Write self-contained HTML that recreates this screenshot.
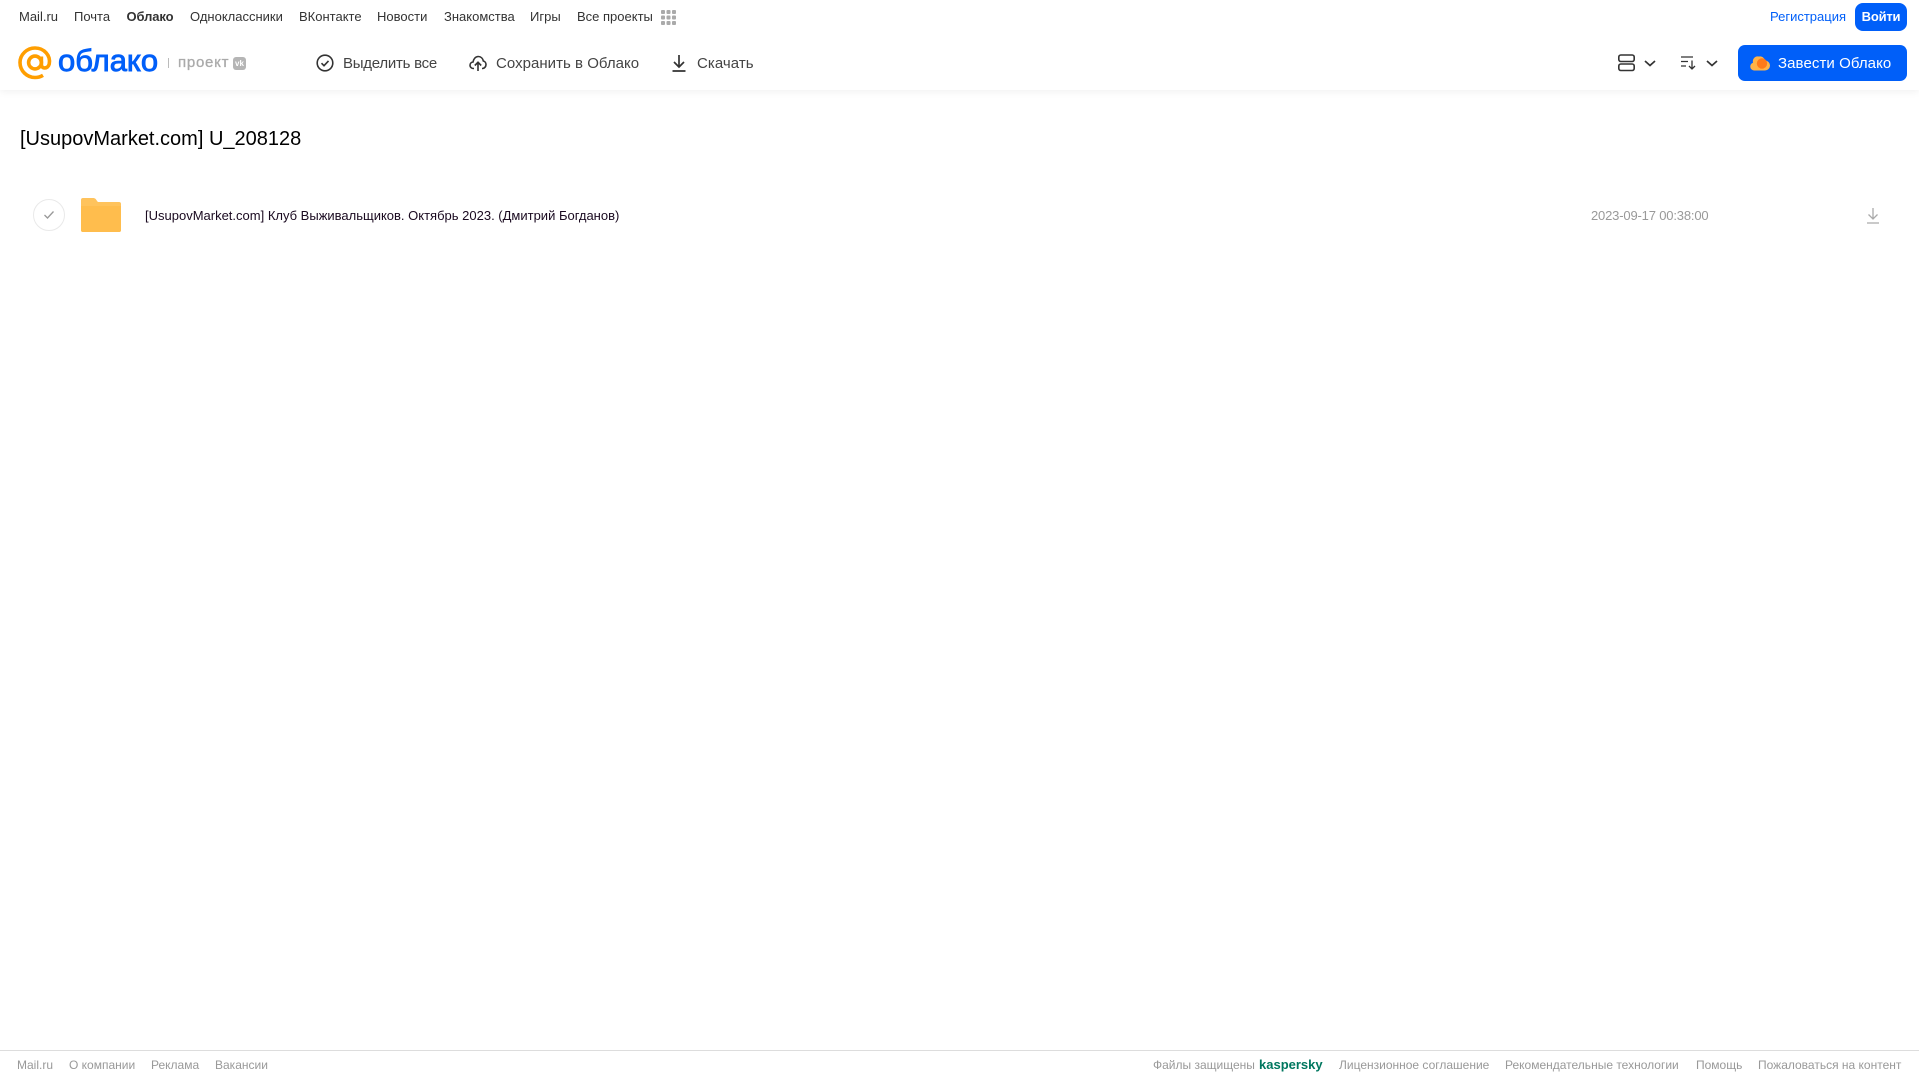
<!DOCTYPE html>
<html lang="ru"><head><meta charset="utf-8"><title>Облако</title>
<style>
html,body{margin:0;padding:0;background:#fff;width:1919px;height:1079px;overflow:hidden;font-family:"Liberation Sans",sans-serif}
.t{position:absolute;white-space:nowrap;line-height:20px}
.n{top:7px;font-size:13px;color:#333}
.a{top:53.500px;font-size:15px;color:#444}
.f{top:1055px;font-size:12px;color:#999}
svg{position:absolute;overflow:visible}
</style></head><body>
<div style="position:absolute;left:0;top:0;width:1919px;height:90px;background:#fff;box-shadow:0 1px 8px rgba(0,0,0,.07)"></div>

<span class="t n" style="left:19px">Mail.ru</span>
<span class="t n" style="left:74px">Почта</span>
<span class="t n" style="left:126.500px;font-weight:bold;letter-spacing:-.1px">Облако</span>
<span class="t n" style="left:190px">Одноклассники</span>
<span class="t n" style="left:299px">ВКонтакте</span>
<span class="t n" style="left:377px">Новости</span>
<span class="t n" style="left:444px">Знакомства</span>
<span class="t n" style="left:530px">Игры</span>
<span class="t n" style="left:577px">Все проекты</span>
<svg style="left:661px;top:10px" width="15" height="15" fill="#aaa"><rect width="4" height="4" rx="1"/><rect x="5.500" width="4" height="4" rx="1"/><rect x="11" width="4" height="4" rx="1"/><rect y="5.500" width="4" height="4" rx="1"/><rect x="5.500" y="5.500" width="4" height="4" rx="1"/><rect x="11" y="5.500" width="4" height="4" rx="1"/><rect y="11" width="4" height="4" rx="1"/><rect x="5.500" y="11" width="4" height="4" rx="1"/><rect x="11" y="11" width="4" height="4" rx="1"/></svg>
<span class="t n" style="left:1770px;color:#005ff9">Регистрация</span>
<div style="position:absolute;left:1855px;top:3px;width:52px;height:28px;border-radius:8px;background:#005ff9;color:#fff;font-size:13px;font-weight:bold;line-height:27px;text-align:center;letter-spacing:-.2px">Войти</div>

<svg style="left:18px;top:46px" width="34" height="34" viewBox="0 0 34 34" fill="none" stroke="#ff9e00" stroke-width="3.600"><circle cx="17" cy="16.500" r="6.400"/><path d="M23.400 10.500V18.500c0 4.800 6.600 4.600 7.800-.4C33 9.500 26 2 17 2 9 2 2 8.500 2 16.500 2 25 9 31.500 17 31.500c3 0 5.500-.7 8-2.200"/></svg>
<span class="t" style="left:58px;top:43px;font-size:31px;line-height:36px;color:#005ff9;-webkit-text-stroke:.9px #005ff9;letter-spacing:0">облако</span>
<div style="position:absolute;left:168px;top:58px;width:1px;height:10px;background:#bbb"></div>
<span class="t" style="left:178px;top:53px;font-size:15px;color:#aaa;-webkit-text-stroke:.3px #aaa;letter-spacing:.75px">проект</span>
<div style="position:absolute;left:233px;top:57px;width:13px;height:13px;border-radius:3px;background:#b5b5b5;color:#fff;font-size:8px;font-weight:bold;line-height:13px;text-align:center">vk</div>

<svg style="left:316px;top:54px" width="18" height="18" viewBox="0 0 18 18" fill="none" stroke="#333" stroke-width="1.600"><circle cx="9" cy="9" r="7.800"/><path d="M5.500 9.200l2.500 2.500 4.500-4.800"/></svg>
<span class="t a" style="left:343px;letter-spacing:-.25px">Выделить все</span>
<svg style="left:469px;top:54px" width="18" height="18" viewBox="0 0 18 18" fill="none" stroke="#333" stroke-width="1.600"><path d="M5 14.500H4.500C2.500 14.500 1 13 1 11.200c0-1.700 1.300-3 3-3.200C4.500 5 6.500 2.500 9.300 2.500c2.600 0 4.500 2 5 4.500 1.500.3 2.700 1.700 2.700 3.500 0 2.200-1.600 4-3.500 4H13"/><path d="M9 17V8.500M5.800 11.500L9 8.300l3.200 3.200"/></svg>
<span class="t a" style="left:496px;letter-spacing:.03px">Сохранить в Облако</span>
<svg style="left:671px;top:54px" width="16" height="18" viewBox="0 0 16 18" fill="none" stroke="#333" stroke-width="1.700"><path d="M8 1v11.500M3 8l5 5 5-5M1.500 17h13"/></svg>
<span class="t a" style="left:697px;letter-spacing:.05px">Скачать</span>

<svg style="left:1618px;top:54px" width="17" height="18" viewBox="0 0 17 18" fill="none" stroke="#333" stroke-width="1.600"><rect x=".8" y="1" width="15.400" height="6.500" rx="2"/><rect x=".8" y="10" width="15.400" height="6.500" rx="2"/></svg>
<svg style="left:1644px;top:60px" width="12" height="7" fill="none" stroke="#333" stroke-width="1.700"><path d="M1 1l5 4.500L11 1"/></svg>
<svg style="left:1681px;top:56px" width="16" height="14" viewBox="0 0 16 14" fill="none" stroke="#333" stroke-width="1.300"><path d="M0 1h12M0 5.500h7M0 10h5M11 4.500V13M8 10l3 3 3-3"/></svg>
<svg style="left:1706px;top:60px" width="12" height="7" fill="none" stroke="#333" stroke-width="1.700"><path d="M1 1l5 4.500L11 1"/></svg>
<div style="position:absolute;left:1738px;top:45px;width:169px;height:36px;border-radius:7px;background:#005ff9"></div>
<svg style="left:1750px;top:54px" width="20" height="17" viewBox="0 0 20 17"><path d="M4 16.500a4 4 0 0 1-1-7.800A5 5 0 0 1 9 2.500a5 5 0 0 1 6 4 5 5 0 0 1 0 10z" fill="#ffb347"/><circle cx="12" cy="9.500" r="5.200" fill="#ff7a1a"/></svg>
<span class="t" style="left:1778px;top:53.500px;font-size:15px;color:#fff;letter-spacing:.08px">Завести Облако</span>

<span class="t" style="left:20px;top:126.500px;font-size:20px;line-height:24px;color:#000">[UsupovMarket.com] U_208128</span>

<div style="position:absolute;left:33px;top:199px;width:30px;height:30px;border:1px solid #e9e9e9;border-radius:50%"></div>
<svg style="left:43px;top:210px" width="12" height="10" fill="none" stroke="#999" stroke-width="1.300"><path d="M1.500 5l3 3 6-6.500"/></svg>
<svg style="left:81px;top:198px" width="40" height="34" viewBox="0 0 40 34"><path d="M2 0h10c2 0 3 1 4 3l1 1h21a2 2 0 0 1 2 2v26a2 2 0 0 1-2 2H2a2 2 0 0 1-2-2V2a2 2 0 0 1 2-2z" fill="#ffc35c"/><path d="M0 8h40v24a2 2 0 0 1-2 2H2a2 2 0 0 1-2-2z" fill="#ffbd4d"/></svg>
<span class="t" style="left:145px;top:206px;font-size:13px;color:#1a0a20">[UsupovMarket.com] Клуб Выживальщиков. Октябрь 2023. (Дмитрий Богданов)</span>
<span class="t" style="left:1591px;top:206px;font-size:13px;color:#999;letter-spacing:-.17px">2023-09-17 00:38:00</span>
<svg style="left:1866px;top:207px" width="14" height="17" viewBox="0 0 14 17" fill="none" stroke="#aaa" stroke-width="1.300"><path d="M7 1v11M2.500 7.500L7 12l4.500-4.500M1 16h12"/></svg>

<div style="position:absolute;left:0;top:1050px;width:1919px;height:1px;background:#ddd"></div>
<span class="t f" style="left:17px">Mail.ru</span>
<span class="t f" style="left:69px">О компании</span>
<span class="t f" style="left:151px">Реклама</span>
<span class="t f" style="left:215px">Вакансии</span>
<span class="t f" style="left:1153px">Файлы защищены</span>
<span class="t" style="left:1259px;top:1055px;font-size:13px;font-weight:bold;color:#00775f">kaspersky</span>
<span class="t f" style="left:1339px">Лицензионное соглашение</span>
<span class="t f" style="left:1505px">Рекомендательные технологии</span>
<span class="t f" style="left:1696px">Помощь</span>
<span class="t f" style="left:1758px">Пожаловаться на контент</span>
</body></html>
